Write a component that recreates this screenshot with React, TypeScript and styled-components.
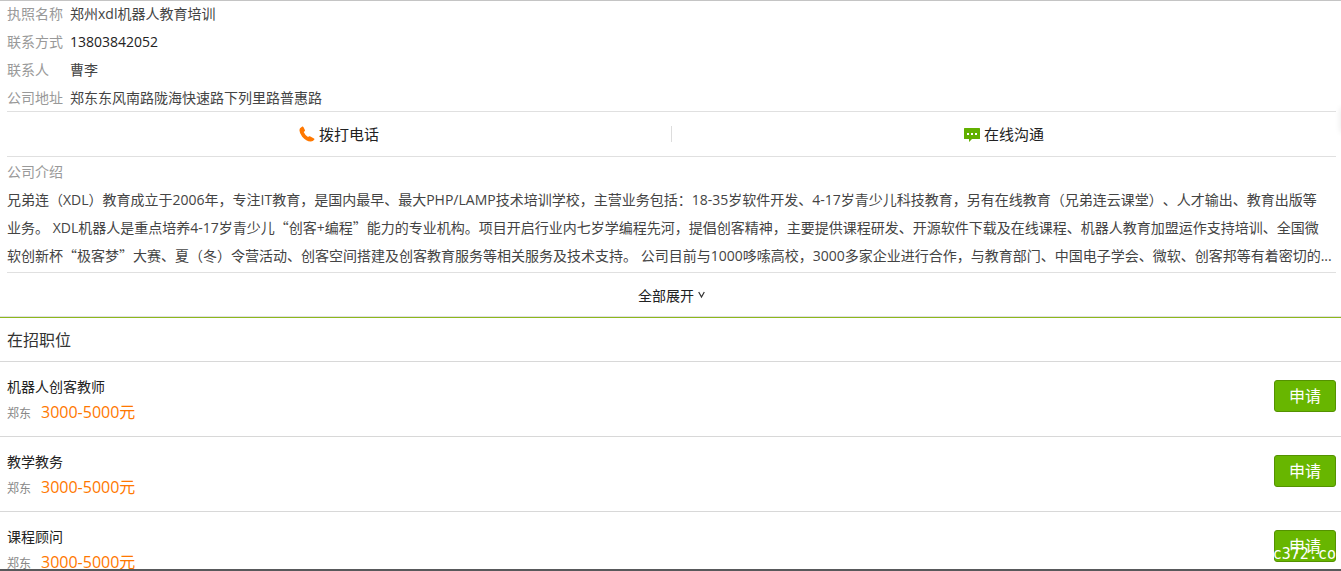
import React from "react";
import styled, { createGlobalStyle } from "styled-components";

const latin = `"Open Sans", "Noto Sans CJK SC", sans-serif`;
const cjk = `"Noto Sans CJK SC", sans-serif`;

const GlobalStyle = createGlobalStyle`
  * { box-sizing: border-box; }
  html { height: 100%; overflow: hidden; }
  body {
    margin: 0;
    height: 100%;
    overflow: hidden;
    background: #fff;
    color: #333;
    font: 14px/28px ${latin};
    text-spacing-trim: space-all;
  }
  #root { height: 100%; }
  h2, h3, p, dl, dd, dt, ul { margin: 0; padding: 0; font-weight: 400; }
  button { font-family: inherit; cursor: pointer; }
  a { color: inherit; text-decoration: none; }
`;

const Page = styled.div`
  position: relative;
  height: 100%;
  overflow: hidden;
`;

const Company = styled.section`
  padding: 0 5px 0 7px;
  box-shadow: inset 0 1px #c4c4c4;
  border-bottom: 1px solid #e0e0e0;
`;

const Facts = styled.dl`
  height: 112px;
  border-bottom: 1px solid #e0e0e0;
`;

const Fact = styled.div`
  display: flex;
  line-height: 28px;
`;

const FactName = styled.dt`
  width: 63px;
  color: #999;
`;

const FactValue = styled.dd<{ $strong?: boolean }>`
  color: ${(p) => (p.$strong ? "#222" : "#444")};
`;

const Contacts = styled.div`
  display: flex;
  align-items: center;
  height: 45px;
  border-bottom: 1px solid #e0e0e0;
`;

const ContactLink = styled.a`
  flex: 1;
  display: flex;
  align-items: center;
  justify-content: center;
  gap: 4px;
  height: 16px;
  font-size: 15px;
  line-height: 16px;
  color: #222;

  &:first-child { border-right: 1px solid #ddd; }
`;

const IntroTitle = styled.h3`
  height: 29px;
  padding-top: 1px;
  font-size: 14px;
  line-height: 28px;
  color: #999;
`;

const Intro = styled.p`
  color: #444;
  height: 87px;
  border-bottom: 1px solid #e0e0e0;
`;

const Quote = styled.span`
  font-family: ${cjk};
  line-height: 16px;
`;

const Expand = styled.button`
  display: flex;
  align-items: center;
  justify-content: center;
  gap: 4px;
  width: 100%;
  height: 43px;
  border: 0;
  padding: 0;
  background: none;
  font-size: 14px;
  color: #222;
`;

const Jobs = styled.section`
  border-top: 1px solid #8db81c;
`;

const JobsTitle = styled.h2`
  height: 44px;
  padding-left: 7px;
  border-bottom: 1px solid #d8d8d8;
  font-size: 16px;
  line-height: 44px;
`;

const JobList = styled.ul`
  list-style: none;
`;

const Job = styled.li`
  display: flex;
  align-items: flex-start;
  justify-content: space-between;
  height: 75px;
  padding: 0 5px 0 7px;
  border-bottom: 1px solid #d8d8d8;
`;

const JobText = styled.div`
  padding-top: 13px;
`;

const JobName = styled.h3`
  font-size: 14px;
  line-height: 24px;
  color: #222;
`;

const JobMeta = styled.p`
  display: flex;
  align-items: baseline;
  gap: 10px;
  line-height: 26px;
`;

const Area = styled.span`
  font-size: 12px;
  color: #888;
`;

const Pay = styled.span`
  font-size: 16px;
  color: #ff7800;
`;

const Apply = styled.button`
  width: 62px;
  height: 32px;
  margin-top: 18px;
  padding: 0;
  border: 1px solid #549200;
  border-radius: 3px;
  background: #68b600;
  color: #fff;
  font-size: 16px;
  line-height: 30px;
`;

const Watermark = styled.span`
  position: absolute;
  right: -4px;
  bottom: 9px;
  color: #fff;
  font: 15px/16px "DejaVu Sans Mono", monospace;
`;

const BottomEdge = styled.div`
  position: absolute;
  left: 0;
  right: 0;
  bottom: 0;
  height: 2px;
  background: #58595b;
`;

const SideShadow = styled.div`
  position: absolute;
  top: 108px;
  right: -4px;
  width: 4px;
  height: 24px;
  box-shadow: 0 0 6px rgba(0, 0, 0, 0.12);
`;

const PhoneIcon = () => (
  <svg width="16" height="16" viewBox="0 0 16 16" aria-hidden="true">
    <path
      fill="#ff7800"
      d="M1 2.2 3.3.6Q4 .3 4.4 1L5.9 4.1Q6.2 4.8 5.6 5.3L4.7 6.1Q5.8 9 9 11L10.2 10.3Q10.8 10 11.4 10.4L15 12.6Q15.7 13.1 15.2 13.8Q14 15.6 11.6 15.5Q7.2 15.2 3.2 10.7Q-.7 5.7 1 2.2Z"
    />
  </svg>
);

const ChatIcon = () => (
  <svg width="16" height="16" viewBox="0 0 16 16" aria-hidden="true">
    <path fill="#62b000" d="M1 2H15.4Q16 2 16 2.6V12.4Q16 13 15.4 13H8L5 16V13H.6Q0 13 0 12.4V2.6Q0 2 .6 2Z" />
    <path fill="#fff" d="M3 7h2v2H3zM7 7h2v2H7zM11 7h2v2h-2z" />
  </svg>
);

const Caret = () => (
  <svg width="7" height="8" viewBox="0 0 7 8" aria-hidden="true">
    <path d="M.7 1 3.5 6 6.3 1" fill="none" stroke="#333" strokeWidth="1.2" />
  </svg>
);

const facts = [
  { name: "执照名称", value: "郑州xdl机器人教育培训" },
  { name: "联系方式", value: "13803842052", phone: true },
  { name: "联系人", value: "曹李" },
  { name: "公司地址", value: "郑东东风南路陇海快速路下列里路普惠路" },
];

const jobs = ["机器人创客教师", "教学教务", "课程顾问"];

export default function App() {
  return (
    <Page>
      <GlobalStyle />
      <Company>
        <Facts>
          {facts.map((f) => (
            <Fact key={f.name}>
              <FactName>{f.name}</FactName>
              <FactValue $strong={f.phone}>
                {f.phone ? <a href={`tel:${f.value}`}>{f.value}</a> : f.value}
              </FactValue>
            </Fact>
          ))}
        </Facts>
        <Contacts>
          <ContactLink href="tel:13803842052">
            <PhoneIcon />
            拨打电话
          </ContactLink>
          <ContactLink href="#chat">
            <ChatIcon />
            在线沟通
          </ContactLink>
        </Contacts>
        <IntroTitle>公司介绍</IntroTitle>
        <Intro>
          兄弟连（XDL）教育成立于2006年，专注IT教育，是国内最早、最大PHP/LAMP技术培训学校，主营业务包括：18-35岁软件开发、4-17岁青少儿科技教育，另有在线教育（兄弟连云课堂）、人才输出、教育出版等
          <br />
          业务。 XDL机器人是重点培养4-17岁青少儿<Quote>“</Quote>创客+编程<Quote>”</Quote>能力的专业机构。项目开启行业内七岁学编程先河，提倡创客精神，主要提供课程研发、开源软件下载及在线课程、机器人教育加盟运作支持培训、全国微
          <br />
          软创新杯<Quote>“</Quote>极客梦<Quote>”</Quote>大赛、夏（冬）令营活动、创客空间搭建及创客教育服务等相关服务及技术支持。
          {" "}公司目前与1000哆嗦高校，3000多家企业进行合作，与教育部门、中国电子学会、微软、创客邦等有着密切的...
        </Intro>
        <Expand type="button">
          全部展开
          <Caret />
        </Expand>
      </Company>
      <Jobs>
        <JobsTitle>在招职位</JobsTitle>
        <JobList>
          {jobs.map((job) => (
            <Job key={job}>
              <JobText>
                <JobName>{job}</JobName>
                <JobMeta>
                  <Area>郑东</Area>
                  <Pay>3000-5000元</Pay>
                </JobMeta>
              </JobText>
              <Apply type="button">申请</Apply>
            </Job>
          ))}
        </JobList>
      </Jobs>
      <Watermark>c372.com</Watermark>
      <SideShadow />
      <BottomEdge />
    </Page>
  );
}
